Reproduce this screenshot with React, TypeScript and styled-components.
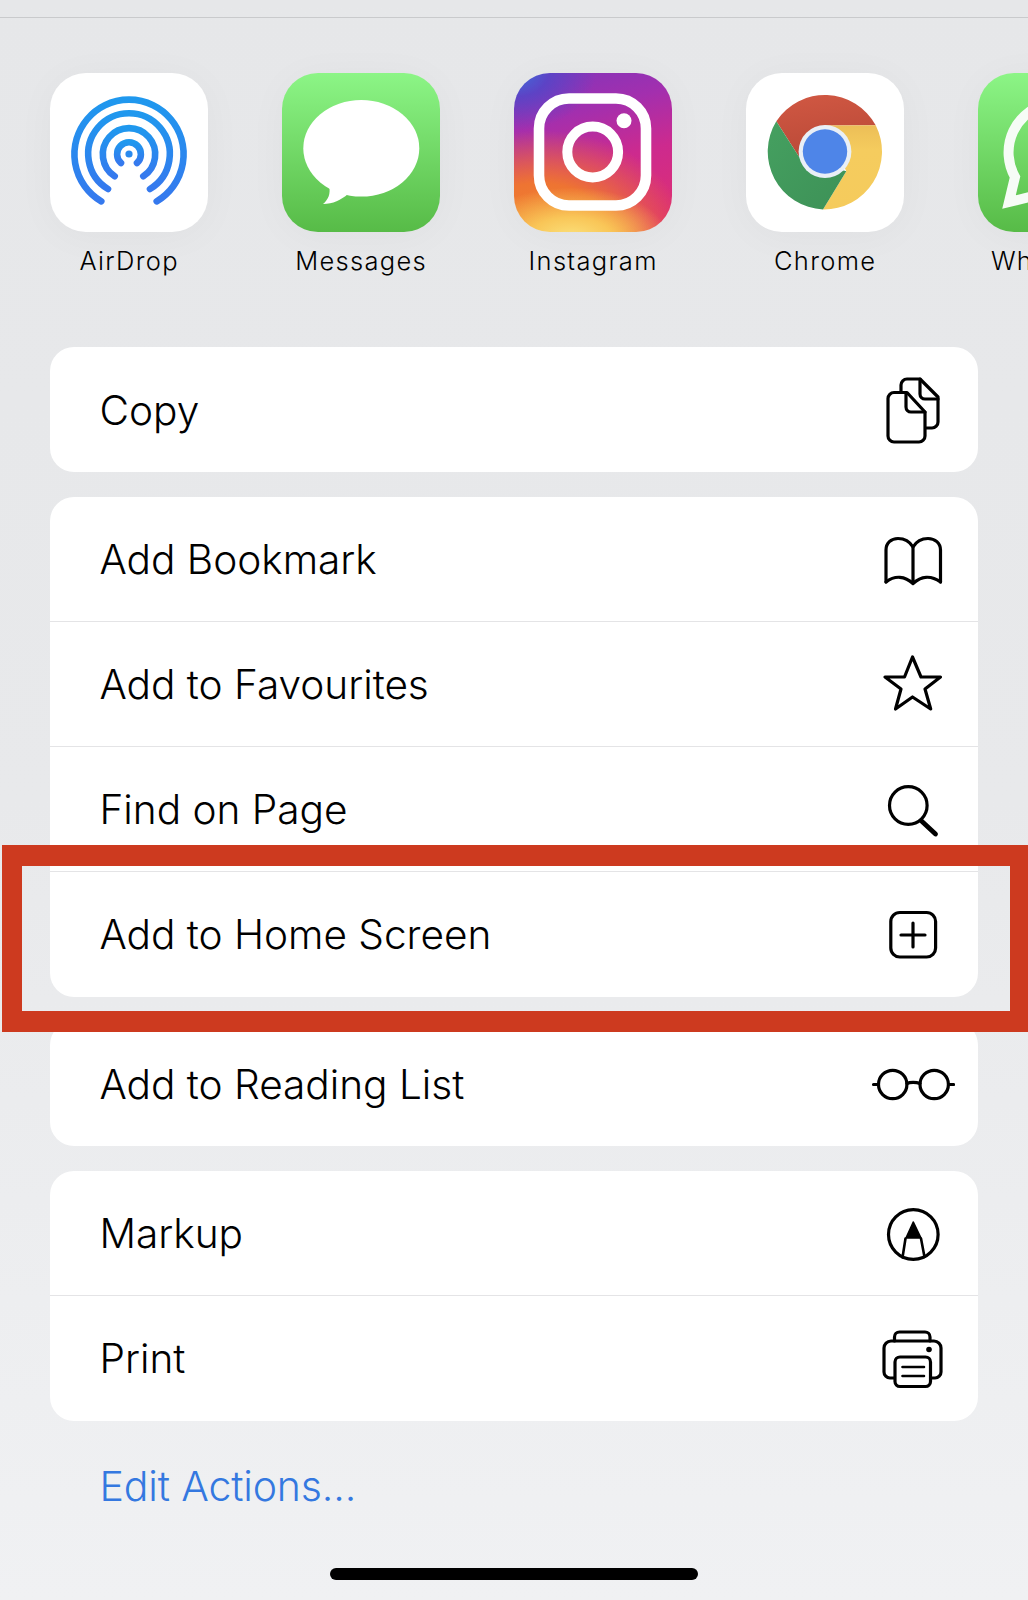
import React from 'react'
import styled, { createGlobalStyle } from 'styled-components'

const GlobalStyle = createGlobalStyle`
  html, body {
    margin: 0;
    padding: 0;
  }
  body {
    font-family: Inter, "Noto Sans", "Liberation Sans", sans-serif;
    background: #e9eaec;
  }
`

const Page = styled.div`
  position: relative;
  width: 1028px;
  height: 1600px;
  overflow: hidden;
  color: #000;
  background: linear-gradient(180deg, #e6e7e9 0%, #e8e9eb 50%, #f0f1f3 100%);
`

const TopEdge = styled.div`
  height: 17px;
  border-bottom: 1px solid #c9cacc;
`

const AppStrip = styled.div`
  display: flex;
  gap: 73.6px;
  height: 274px;
  padding: 55px 0 0 50px;
  overflow: hidden;
`

const AppItem = styled.div`
  flex: 0 0 158.4px;
  display: flex;
  flex-direction: column;
  align-items: center;
`

const AppTile = styled.div<{ $bg?: string }>`
  width: 158.4px;
  height: 159px;
  border-radius: 36px;
  background: ${p => p.$bg || '#fff'};
  box-shadow: 0 4px 40px rgba(0, 0, 0, 0.035);
  overflow: hidden;

  svg {
    display: block;
  }
`

const AppName = styled.div`
  margin-top: 12px;
  font-size: 25.5px;
  line-height: 34px;
  letter-spacing: 1.3px;
  font-weight: 350;
  white-space: nowrap;
`

const Stack = styled.div`
  display: flex;
  flex-direction: column;
  gap: 24.5px;
  margin: 0 50px;
`

const Card = styled.div`
  background: #fff;
  border-radius: 24px;
  overflow: hidden;
`

const Row = styled.div`
  display: flex;
  align-items: center;
  justify-content: space-between;
  box-sizing: border-box;
  height: 125px;
  padding: 0 23px 0 49.5px;

  &:not(:last-child) {
    border-bottom: 1px solid #e4e4e6;
  }
`

const RowLabel = styled.span`
  margin-top: 2px;
  font-size: 40.6px;
  font-weight: 350;
  letter-spacing: -0.02px;
  line-height: 50px;
`

const RowIcon = styled.svg`
  flex: 0 0 84px;
  width: 84px;
  height: 84px;
  fill: none;
  stroke: #000;
  stroke-width: 3.2;
  stroke-linecap: round;
  stroke-linejoin: round;
`

const EditLink = styled.div`
  margin: 40px 0 0 99.5px;
  font-size: 41px;
  font-weight: 350;
  line-height: 50px;
  letter-spacing: -0.15px;
  color: #3478e0;
`

const HomeBar = styled.div`
  width: 368px;
  height: 12px;
  margin: 57.5px auto 0;
  border-radius: 6px;
  background: #000;
`

const Highlight = styled.div`
  position: absolute;
  top: 845px;
  left: 2px;
  right: 0;
  height: 187px;
  box-sizing: border-box;
  border: solid #cd3a1f;
  border-width: 21px 18px 21px 20px;
  pointer-events: none;
`

const AirDropIcon = () => (
  <svg width="158" height="158" viewBox="0 0 158 158" fill="none" strokeWidth="6.6" strokeLinecap="round">
    <defs>
      <linearGradient id="airdrop" x1="0" y1="0" x2="0" y2="1" gradientUnits="objectBoundingBox">
        <stop offset="0" stopColor="#1f98ee" />
        <stop offset="1" stopColor="#3579ee" />
      </linearGradient>
    </defs>
    <g stroke="url(#airdrop)">
      <path d="M51.3 128.3A54.6 54.6 0 1 1 106.7 128.3" />
      <path d="M58 116A40.8 40.8 0 1 1 100 116" />
      <path d="M64.7 103.3A26.2 26.2 0 1 1 93.3 103.3" />
      <path d="M71 90A11.9 11.9 0 1 1 87 90" />
    </g>
    <circle cx="79" cy="81" r="3.6" fill="#2a8aee" />
  </svg>
)

const MessagesIcon = () => (
  <svg width="158" height="158" viewBox="0 0 158 158">
    <ellipse cx="79.3" cy="75.3" rx="58" ry="48.3" fill="#fff" />
    <path d="M47 112C49 121 46 127 41 131C51 131 59 127 66 121Z" fill="#fff" />
  </svg>
)

const InstagramIcon = () => (
  <svg width="158" height="158" viewBox="0 0 158 158" fill="none" stroke="#fff">
    <rect x="25" y="25.5" width="107" height="107" rx="30" strokeWidth="10.6" />
    <circle cx="78.7" cy="79" r="25.4" strokeWidth="10" />
    <circle cx="110" cy="47.7" r="7.5" fill="#fff" stroke="none" />
  </svg>
)

const ChromeIcon = () => (
  <svg width="158" height="158" viewBox="0 0 158 158">
    <defs>
      <linearGradient id="chrome-red" x1="0" y1="0" x2="0.25" y2="1">
        <stop offset="0" stopColor="#d15843" />
        <stop offset="1" stopColor="#bb4a38" />
      </linearGradient>
      <linearGradient id="chrome-yellow" x1="0" y1="0" x2="0" y2="1">
        <stop offset="0" stopColor="#ecbe57" />
        <stop offset="0.3" stopColor="#f5cc5e" />
        <stop offset="1" stopColor="#f5cb5c" />
      </linearGradient>
      <linearGradient id="chrome-green" x1="0" y1="0" x2="1" y2="1">
        <stop offset="0" stopColor="#45a060" />
        <stop offset="1" stopColor="#3d9157" />
      </linearGradient>
    </defs>
    <path d="M30.3 48.2A58 58 0 0 1 129.7 52.2L79 52.5L52.7 83.2Z" fill="url(#chrome-red)" />
    <path d="M129.7 52.2A58 58 0 0 1 77 136.5L100.3 98.2L79 52.5Z" fill="url(#chrome-yellow)" />
    <path d="M77 136.5A58 58 0 0 1 30.3 48.2L52.7 83.2L100.3 98.2Z" fill="url(#chrome-green)" />
    <circle cx="79" cy="78.500" r="26.4" fill="#e9eff6" />
    <circle cx="79" cy="78.500" r="22.2" fill="#4e85e8" />
  </svg>
)

const WhatsAppIcon = () => (
  <svg width="158" height="158" viewBox="0 0 158 158" fill="none">
    <path d="M37 104L31 129L56 123A50 50 0 1 0 37 104Z" stroke="#f6fcf6" strokeWidth="10" strokeLinejoin="miter" />
  </svg>
)

const GREEN = 'linear-gradient(180deg, #8cf586 0%, #57bb47 100%)'
const INSTAGRAM = `
  radial-gradient(ellipse 62% 32% at 36% 104%, #fbe27c 0%, #f9c658 42%, rgba(246, 150, 50, 0) 100%),
  radial-gradient(ellipse 92% 64% at 16% 100%, #f0852f 0%, #ee7432 48%, rgba(230, 60, 100, 0) 100%),
  radial-gradient(ellipse 52% 36% at 0% 0%, #3f6fdc 0%, rgba(84, 70, 200, 0.85) 42%, rgba(110, 60, 190, 0) 100%),
  linear-gradient(165deg, #8035bb 0%, #a32fae 28%, #cd2a8e 56%, #e2306c 100%)
`

const apps = [
  { name: 'AirDrop', icon: <AirDropIcon /> },
  { name: 'Messages', bg: GREEN, icon: <MessagesIcon /> },
  { name: 'Instagram', bg: INSTAGRAM, icon: <InstagramIcon /> },
  { name: 'Chrome', icon: <ChromeIcon /> },
  { name: 'WhatsApp', bg: GREEN, icon: <WhatsAppIcon /> },
]

const CopyGlyph = () => (
  <RowIcon viewBox="0 0 84 84">
    <path d="M30 23V17a6 6 0 0 1 6-6H49L67 29V54a6 6 0 0 1-6 6H55.500" />
    <path d="M49 11V26a5 5 0 0 0 5 5H67" />
    <path d="M23 24.500H36L54 44V68a6 6 0 0 1-6 6H23a6 6 0 0 1-6-6V30.500a6 6 0 0 1 6-6Z" />
    <path d="M35 25V39a5 5 0 0 0 5 5H54" />
  </RowIcon>
)

const BookGlyph = () => (
  <RowIcon viewBox="0 0 84 84">
    <path d="M15 65V33C15 26 20 21.500 27 21.500C34 21.500 39 25 42 30C45 25 50 21.500 57 21.500C64 21.500 69.500 26 69.500 33V65" />
    <path d="M15 65C24 58 34 59 42 66.500C50 59 60 58 69.500 65" />
    <path d="M42 30V66" />
  </RowIcon>
)

const StarGlyph = () => (
  <RowIcon viewBox="0 0 84 84">
    <path d="M41.500 15L50 35H69.500L54 47L59.700 67L41.500 55L24.500 67L30 47L14 35H33.500Z" />
  </RowIcon>
)

const SearchGlyph = () => (
  <RowIcon viewBox="0 0 84 84">
    <circle cx="37.300" cy="38.500" r="18.800" />
    <path d="M50.500 54L64.500 67" strokeWidth="4.800" />
  </RowIcon>
)

const AddSquareGlyph = () => (
  <RowIcon viewBox="0 0 84 84">
    <rect x="19.800" y="20.500" width="44.800" height="44.500" rx="9" />
    <path d="M42 31V55M30 43H54" />
  </RowIcon>
)

const GlassesGlyph = () => (
  <RowIcon viewBox="0 0 84 84" strokeWidth="3.600">
    <circle cx="21.700" cy="42.500" r="14.200" />
    <circle cx="63.200" cy="42.500" r="14.200" />
    <path d="M36 41.500C39 40 45 40 49 41.500M2.500 42.500H7M78 42.500H82.500" />
  </RowIcon>
)

const MarkupGlyph = () => (
  <RowIcon viewBox="0 0 84 84">
    <circle cx="42.300" cy="43.500" r="24.800" />
    <path d="M42.300 31L35 47H50Z" fill="#000" strokeWidth="1.600" />
    <path d="M34.500 47.500L31.500 66.500M50 47.500L53.500 66" strokeWidth="2.600" />
  </RowIcon>
)

const PrintGlyph = () => (
  <RowIcon viewBox="0 0 84 84">
    <path d="M23.500 25V21a5 5 0 0 1 5-5H54a5 5 0 0 1 5 5V25" />
    <path d="M23 62H19a6 6 0 0 1-6-6V32a7 7 0 0 1 7-7H63a7 7 0 0 1 7 7V56a6 6 0 0 1-6 6H60" />
    <rect x="24" y="41" width="35.500" height="29.500" rx="5" />
    <path d="M31.500 51H53M31.500 60H53" strokeWidth="2.600" />
    <circle cx="58" cy="33.500" r="2.800" fill="#000" stroke="none" />
  </RowIcon>
)

const groups = [
  [{ label: 'Copy', icon: <CopyGlyph /> }],
  [
    { label: 'Add Bookmark', icon: <BookGlyph /> },
    { label: 'Add to Favourites', icon: <StarGlyph /> },
    { label: 'Find on Page', icon: <SearchGlyph /> },
    { label: 'Add to Home Screen', icon: <AddSquareGlyph /> },
  ],
  [{ label: 'Add to Reading List', icon: <GlassesGlyph /> }],
  [
    { label: 'Markup', icon: <MarkupGlyph /> },
    { label: 'Print', icon: <PrintGlyph /> },
  ],
]

export default function App() {
  return (
    <Page>
      <GlobalStyle />
      <TopEdge />
      <AppStrip>
        {apps.map(app => (
          <AppItem key={app.name}>
            <AppTile $bg={app.bg}>{app.icon}</AppTile>
            <AppName>{app.name}</AppName>
          </AppItem>
        ))}
      </AppStrip>
      <Stack>
        {groups.map(rows => (
          <Card key={rows[0].label}>
            {rows.map(row => (
              <Row key={row.label}>
                <RowLabel>{row.label}</RowLabel>
                {row.icon}
              </Row>
            ))}
          </Card>
        ))}
      </Stack>
      <EditLink>Edit Actions...</EditLink>
      <HomeBar />
      <Highlight />
    </Page>
  )
}
